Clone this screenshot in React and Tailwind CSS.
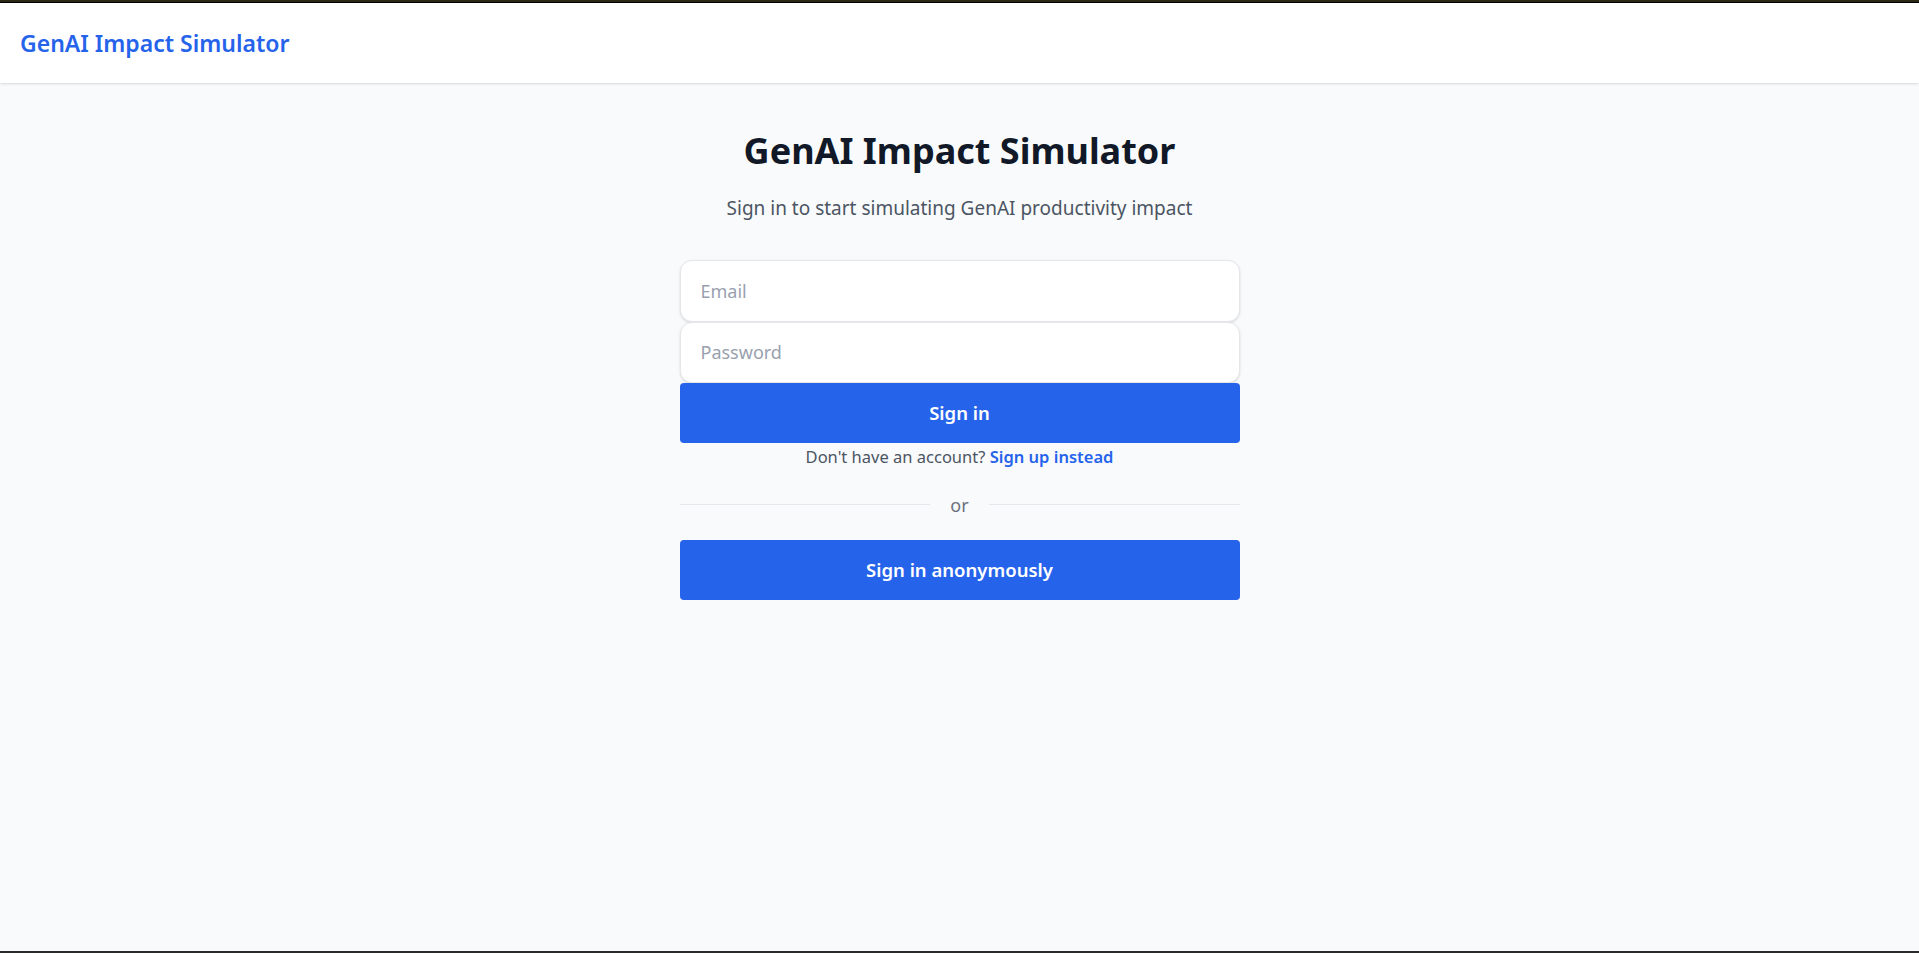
import React from "react";

const font = { fontFamily: '"Noto Sans", "Open Sans", Arial, sans-serif' };

function SignInForm() {
  return (
    <div className="w-[560px] flex flex-col">
      <input
        type="email"
        placeholder="Email"
        className="w-full h-[62px] px-5 bg-white border border-gray-200 rounded-xl shadow-sm text-lg text-gray-900 placeholder:text-gray-400 outline-none"
      />
      <input
        type="password"
        placeholder="Password"
        className="w-full h-[61px] px-5 bg-white border border-gray-200 rounded-xl shadow-sm text-lg text-gray-900 placeholder:text-gray-400 outline-none"
      />
      <button className="w-full h-[60px] bg-[#2563eb] text-white text-[18.5px] font-semibold rounded">
        Sign in
      </button>
      <p className="text-center text-[16.5px] leading-7 text-[#4b5563]">
        Don't have an account?{" "}
        <button className="text-[#2563eb] font-semibold">Sign up instead</button>
      </p>

      <div className="flex items-center mt-5">
        <div className="flex-1 h-px bg-[#e5e7eb]" />
        <span className="px-5 text-lg text-[#6b7280] leading-7">or</span>
        <div className="flex-1 h-px bg-[#e5e7eb]" />
      </div>

      <button className="mt-[21px] w-full h-[60px] bg-[#2563eb] text-white text-[18.5px] font-semibold rounded">
        Sign in anonymously
      </button>
    </div>
  );
}

export default function App() {
  return (
    <div className="h-screen flex flex-col bg-[#f9fafb]" style={font}>
      <div className="h-[3px] bg-[#2c2812] border-b border-black" />
      <header className="h-20 bg-white shadow-sm flex items-center px-5">
        <h2 className="text-[23px] font-semibold text-[#2563eb]">GenAI Impact Simulator</h2>
      </header>

      <main className="flex-1 flex flex-col items-center pt-12">
        <h1 className="text-4xl font-bold text-[#111827]">GenAI Impact Simulator</h1>
        <p className="mt-[23px] mb-[37px] text-[19px] text-[#4b5563]">
          Sign in to start simulating GenAI productivity impact
        </p>
        <SignInForm />
      </main>

      <div className="h-[2px] bg-[#2a2a2a]" />
    </div>
  );
}
